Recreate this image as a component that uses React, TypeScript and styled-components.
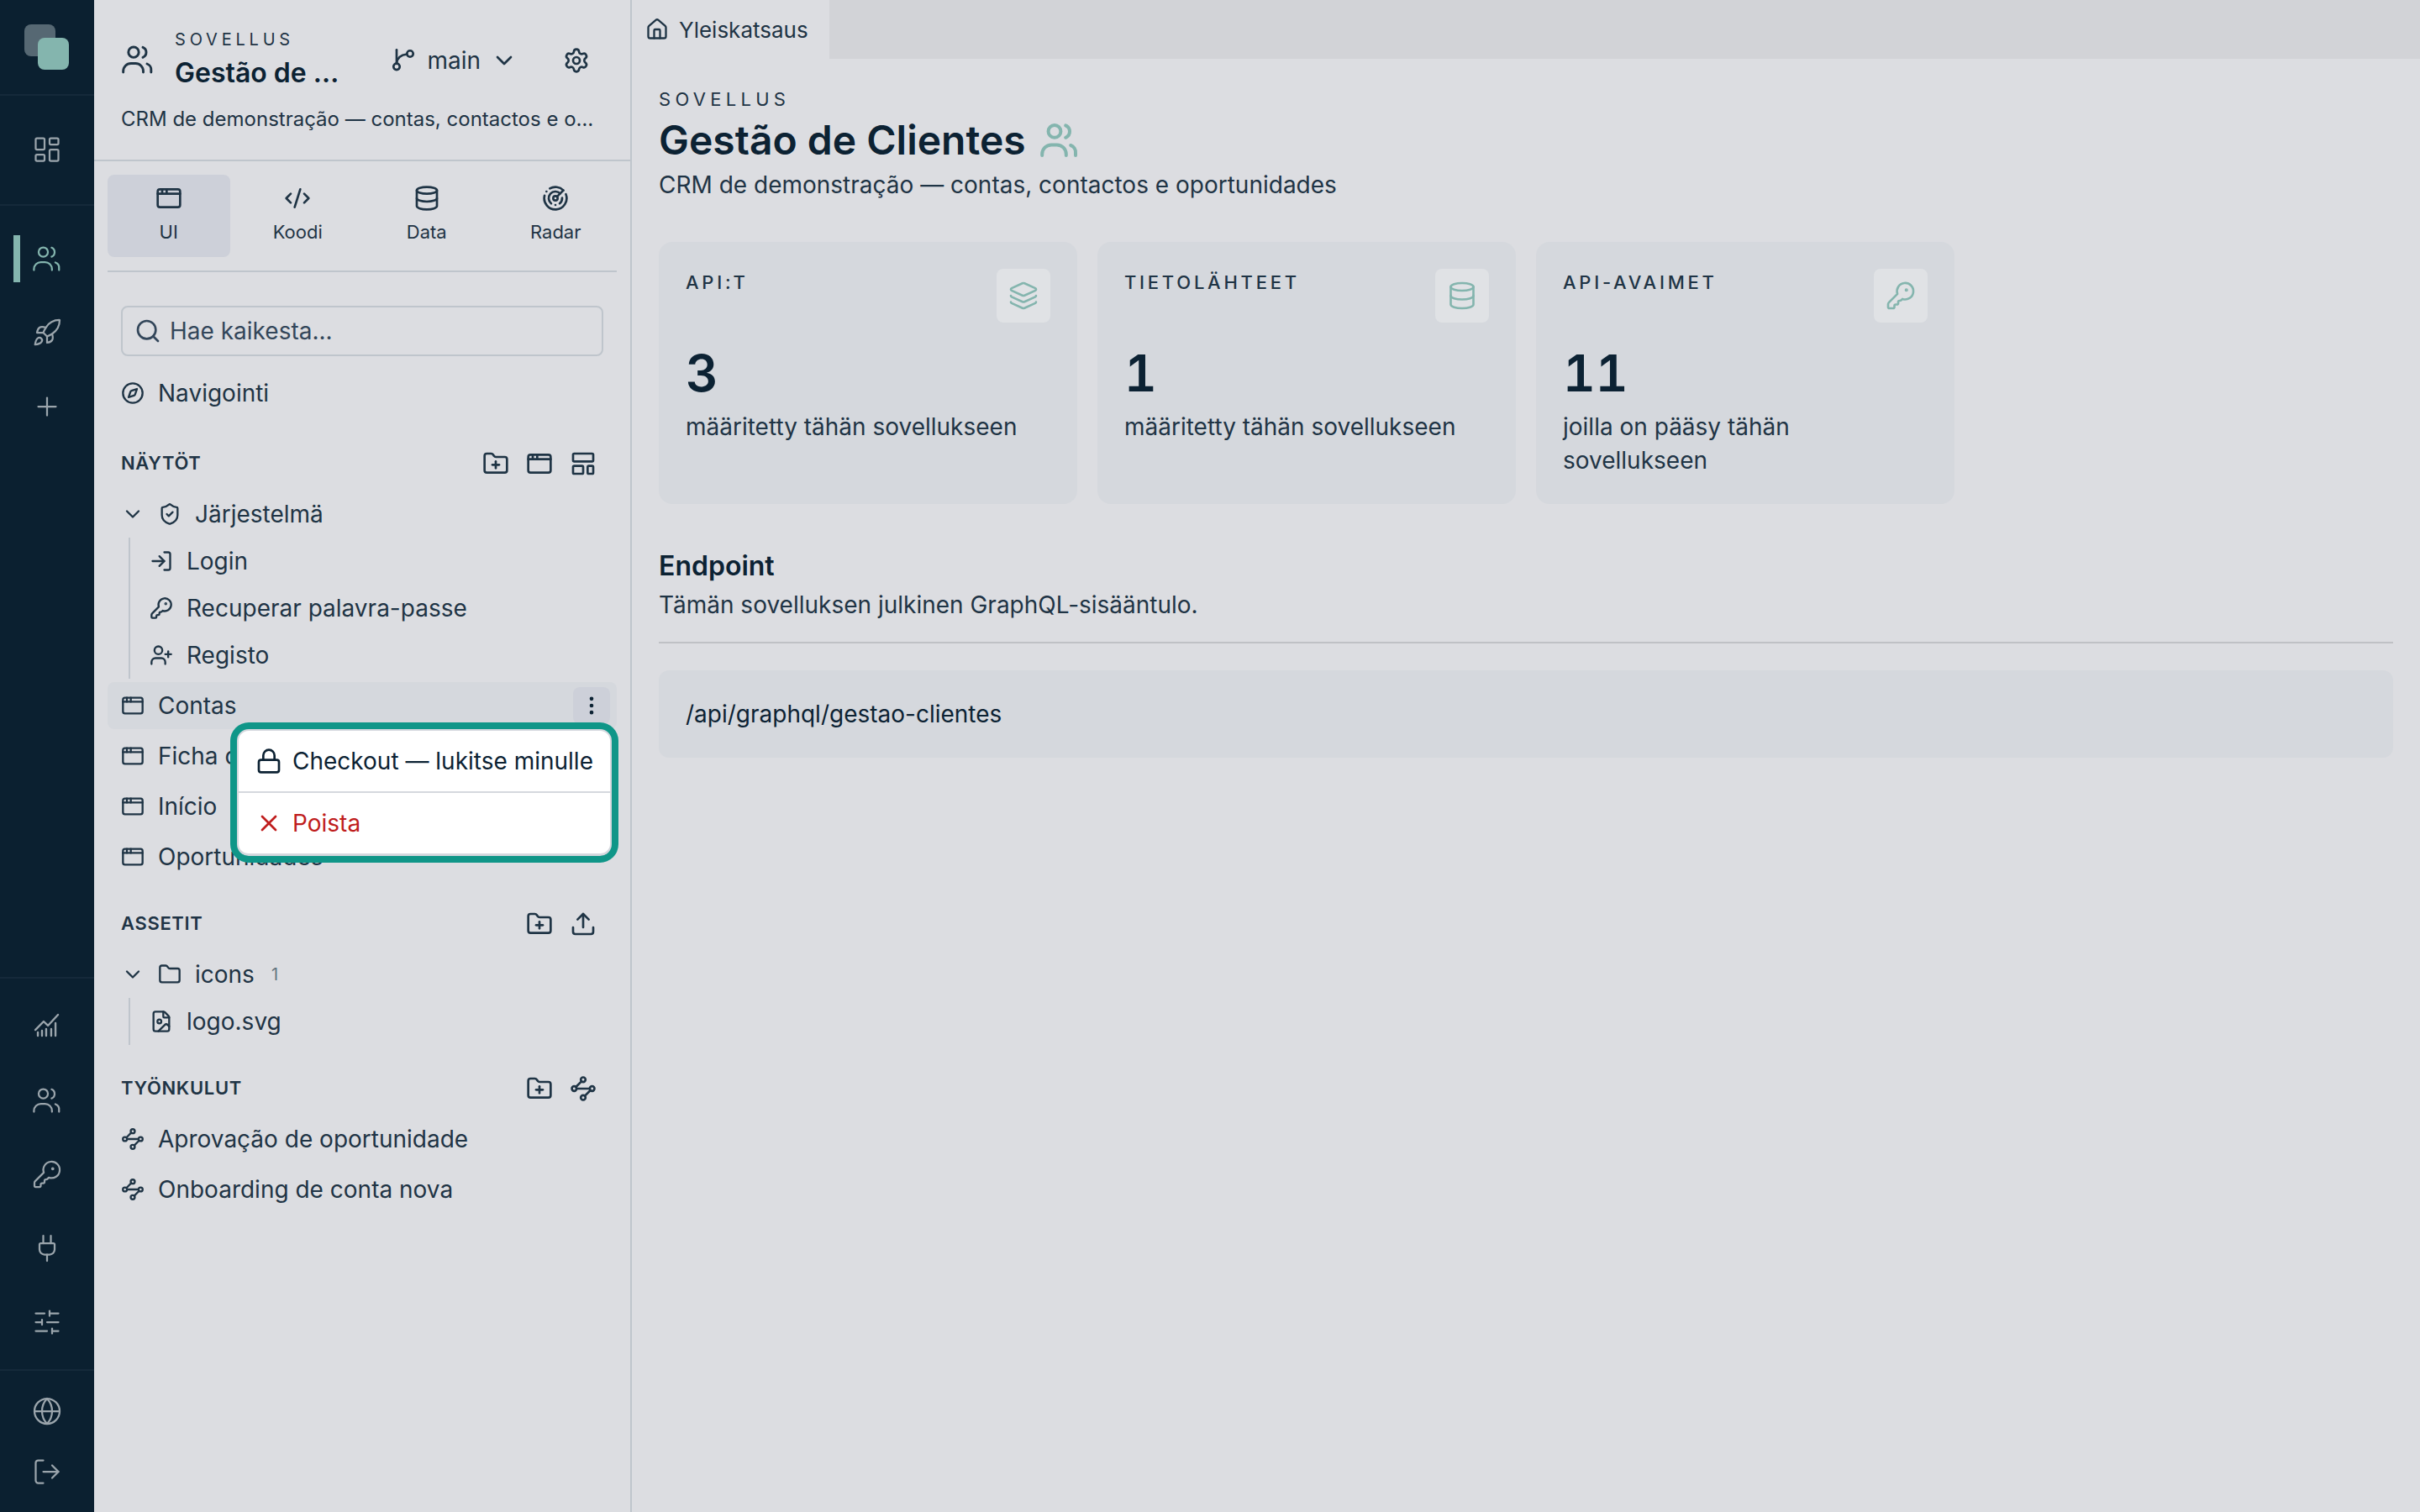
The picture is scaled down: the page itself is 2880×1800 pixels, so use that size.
import React from 'react';
import styled, { createGlobalStyle } from 'styled-components';
import {
  AppWindow, ChevronDown, CodeXml, Compass, Database, EllipsisVertical, FileImage, Folder,
  FolderPlus, Globe, House, KeyRound, Layers, LayoutDashboard, LayoutTemplate, Lock, LogIn,
  LogOut, Plug, Plus, Radar, Rocket, Search, Settings, ShieldCheck, SlidersHorizontal, Upload,
  UserPlus, X,
} from 'lucide-react';

const colors = {
  page: '#dcdde1',
  rail: '#0b2030',
  railLine: '#15293a',
  railIcon: '#9ba5ac',
  teal: '#84b5ae',
  ring: '#0f9688',
  ink: '#0c2233',
  text: '#1f3445',
  line: '#bfc5cc',
  soft: '#d5d8dd',
  active: '#cdd0d9',
  red: '#bf1d1d',
};

const GlobalStyle = createGlobalStyle`
  html, body {
    margin: 0;
    height: 100%;
    background: ${colors.page};
  }
  body {
    font-family: Inter, "Liberation Sans", sans-serif;
    color: ${colors.text};
  }
  svg {
    display: block;
    flex: none;
  }
`;

const Shell = styled.div`
  display: flex;
  width: 100%;
  height: 100vh;
  overflow: hidden;
`;

/* left rail */

const Rail = styled.nav`
  display: flex;
  flex-direction: column;
  flex: none;
  width: 112px;
  background: ${colors.rail};
  color: ${colors.railIcon};
`;

const LogoBlock = styled.div`
  height: 83px;
  padding: 29px 0 0 29px;
  border-bottom: 2px solid ${colors.railLine};
`;

const LogoMark = styled.div`
  position: relative;
  width: 53px;
  height: 54px;
`;

const LogoBack = styled.span`
  position: absolute;
  top: 0;
  left: 0;
  width: 37px;
  height: 38px;
  border-radius: 8px;
  background: #566873;
`;

const LogoFront = styled.span`
  position: absolute;
  right: 0;
  bottom: 0;
  width: 37px;
  height: 38px;
  border-radius: 8px;
  background: ${colors.teal};
`;

const RailGroup = styled.div<{ $pad: string; $line?: boolean; $grow?: boolean }>`
  display: flex;
  flex-direction: column;
  padding: ${p => p.$pad};
  border-bottom: ${p => (p.$line ? `2px solid ${colors.railLine}` : 'none')};
  flex: ${p => (p.$grow ? 1 : 'none')};
`;

const RailSlot = styled.a<{ $h?: number; $on?: boolean }>`
  position: relative;
  display: flex;
  align-items: center;
  justify-content: center;
  height: ${p => p.$h ?? 88}px;
  color: ${p => (p.$on ? colors.teal : 'inherit')};
`;

const RailMarker = styled.span`
  position: absolute;
  top: 16px;
  left: 16px;
  width: 8px;
  height: 56px;
  background: ${colors.teal};
`;

/* explorer sidebar */

const Sidebar = styled.aside`
  display: flex;
  flex-direction: column;
  flex: none;
  width: 640px;
  box-sizing: border-box;
  border-right: 2px solid ${colors.line};
`;

const SideHeader = styled.header`
  display: flex;
  flex-direction: column;
  gap: 19px;
  height: 192px;
  box-sizing: border-box;
  padding: 35px 48px 0 32px;
  border-bottom: 2px solid ${colors.line};
`;

const HeaderTop = styled.div`
  display: flex;
  align-items: center;
  gap: 24px;
`;

const TitleBox = styled.div`
  display: flex;
  flex-direction: column;
  gap: 8px;
  width: 196px;
`;

const Eyebrow = styled.div<{ $size: number }>`
  font-size: ${p => p.$size}px;
  line-height: ${p => p.$size + 4}px;
  letter-spacing: 0.24em;
  color: ${colors.text};
`;

const AppName = styled.div`
  font-size: 32px;
  line-height: 40px;
  font-weight: 600;
  color: ${colors.ink};
  white-space: nowrap;
  overflow: hidden;
  text-overflow: ellipsis;
`;

const BranchButton = styled.button`
  display: flex;
  align-items: center;
  gap: 12px;
  margin: 2px 30px 0 auto;
  padding: 0;
  border: 0;
  background: none;
  font: inherit;
  font-size: 28px;
  line-height: 40px;
  color: ${colors.text};
`;

const GearIcon = styled(Settings)`
  margin-top: 2px;
`;

const HeaderNote = styled.p`
  margin: 0;
  font-size: 24px;
  line-height: 32px;
  width: 574px;
  color: ${colors.text};
  white-space: nowrap;
  overflow: hidden;
  text-overflow: ellipsis;
`;

const SideBody = styled.div`
  display: flex;
  flex-direction: column;
  padding: 16px 16px 0;
`;

const ModeTabs = styled.div`
  display: grid;
  grid-template-columns: repeat(4, 1fr);
  gap: 8px;
  padding-bottom: 16px;
  border-bottom: 2px solid ${colors.line};
`;

const ModeTab = styled.button<{ $on?: boolean }>`
  display: flex;
  flex-direction: column;
  align-items: center;
  gap: 9px;
  height: 98px;
  box-sizing: border-box;
  padding: 12px 0 0;
  border: 0;
  border-radius: 8px;
  background: ${p => (p.$on ? colors.active : 'transparent')};
  font: inherit;
  font-size: 22px;
  line-height: 30px;
  color: ${colors.text};
`;

const SearchBox = styled.div`
  display: flex;
  align-items: center;
  gap: 10px;
  height: 60px;
  box-sizing: border-box;
  margin: 40px 16px 16px;
  padding: 0 14px;
  border: 2px solid ${colors.line};
  border-radius: 8px;
  font-size: 28px;
  color: #33465a;
`;

const Row = styled.div<{ $hover?: boolean; $child?: boolean }>`
  position: relative;
  display: flex;
  align-items: center;
  gap: 16px;
  height: 56px;
  box-sizing: border-box;
  padding: 0 8px 0 ${p => (p.$child ? '23px' : '16px')};
  border-radius: 8px;
  background: ${p => (p.$hover ? colors.soft : 'transparent')};
  font-size: 28px;
  color: ${colors.text};
  white-space: nowrap;
`;

const RootRows = styled.div<{ $top?: number }>`
  display: flex;
  flex-direction: column;
  gap: 4px;
  margin-top: ${p => p.$top ?? 0}px;
`;

const SectionHead = styled.div<{ $top?: number }>`
  display: flex;
  align-items: center;
  justify-content: space-between;
  height: 44px;
  margin: ${p => p.$top ?? 34}px 0 10px;
  padding: 0 18px 0 16px;
  font-size: 22px;
  font-weight: 600;
  letter-spacing: 0.03em;
  color: ${colors.text};
`;

const SectionLabel = styled.span`
  margin-top: -3px;
`;

const SectionActions = styled.div`
  display: flex;
  gap: 8px;
`;

const IconButton = styled.button`
  display: flex;
  align-items: center;
  justify-content: center;
  width: 44px;
  height: 44px;
  padding: 0;
  border: 0;
  border-radius: 8px;
  background: none;
  color: ${colors.text};
`;

const Kebab = styled(IconButton)`
  margin-left: auto;
  background: ${colors.active};
  color: ${colors.ink};
`;

const TreeChildren = styled.div`
  margin-left: 25px;
  border-left: 2px solid ${colors.line};
`;

const Count = styled.span`
  margin-left: 4px;
  font-size: 20px;
  color: #64747f;
`;

const Popover = styled.div`
  position: absolute;
  top: 56px;
  right: 6px;
  z-index: 5;
  width: 446px;
  box-sizing: border-box;
  border: 2px solid #d5d8de;
  border-bottom-width: 3px;
  border-radius: 14px;
  background: #fff;
  box-shadow: 0 0 0 8px ${colors.ring};
`;

const MenuItem = styled.div<{ $danger?: boolean; $split?: boolean }>`
  display: flex;
  align-items: center;
  gap: 12px;
  height: 72px;
  padding: 0 20px;
  border-top: ${p => (p.$split ? '2px solid #d5d8de' : 'none')};
  font-size: 28px;
  color: ${p => (p.$danger ? colors.red : colors.ink)};
`;

/* main area */

const Main = styled.main`
  display: flex;
  flex-direction: column;
  flex: 1;
  min-width: 0;
`;

const TabBar = styled.div`
  display: flex;
  flex: none;
  height: 70px;
  background: #d2d3d7;
`;

const PageTab = styled.div`
  display: flex;
  align-items: center;
  gap: 12px;
  padding: 0 25px 0 16px;
  background: ${colors.page};
  font-size: 26px;
  color: ${colors.text};
`;

const Content = styled.div`
  display: flex;
  flex-direction: column;
  padding: 35px 32px 0;
`;

const PageTitle = styled.h1`
  display: flex;
  align-items: center;
  gap: 16px;
  margin: 6px 0 3px;
  font-size: 48px;
  line-height: 60px;
  font-weight: 600;
  color: ${colors.ink};
`;

const TitleIcon = styled.span`
  color: ${colors.teal};
`;

const Lead = styled.p`
  margin: 0;
  font-size: 28px;
  line-height: 40px;
  color: ${colors.text};
`;

const CardGrid = styled.div`
  display: grid;
  grid-template-columns: repeat(3, 498px);
  gap: 24px;
  margin-top: 48px;
`;

const Card = styled.section`
  padding: 32px;
  border-radius: 16px;
  background: ${colors.soft};
`;

const CardTop = styled.div`
  display: flex;
  align-items: flex-start;
  justify-content: space-between;
`;

const CardLabel = styled.div`
  font-size: 22px;
  line-height: 32px;
  font-weight: 500;
  letter-spacing: 0.17em;
  color: ${colors.text};
`;

const CardIcon = styled.div`
  display: flex;
  align-items: center;
  justify-content: center;
  width: 64px;
  height: 64px;
  border-radius: 8px;
  background: #e0e2e5;
  color: ${colors.teal};
`;

const CardValue = styled.div`
  margin: 24px 0 8px;
  font-size: 60px;
  line-height: 72px;
  font-weight: 600;
  font-variant-numeric: tabular-nums;
  color: ${colors.ink};
`;

const CardNote = styled.div`
  font-size: 28px;
  line-height: 40px;
  color: ${colors.text};
`;

const SectionTitle = styled.h2`
  margin: 52px 0 4px;
  font-size: 32px;
  line-height: 44px;
  font-weight: 600;
  color: ${colors.ink};
`;

const SectionNote = styled.p`
  margin: 0;
  padding-bottom: 24px;
  border-bottom: 2px solid #bfc1c5;
  font-size: 28px;
  line-height: 40px;
  color: ${colors.text};
`;

const EndpointBox = styled.div`
  margin-top: 32px;
  padding: 32px;
  border-radius: 12px;
  background: ${colors.soft};
  font-size: 28px;
  line-height: 40px;
  color: ${colors.ink};
`;

// lucide's users is squarer than the one in the app, so it's drawn by hand
const UsersIcon = ({ size, strokeWidth = 1.75 }: { size: number; strokeWidth?: number }) => (
  <svg width={size} height={size} viewBox="0 0 24 24" fill="none" stroke="currentColor"
    strokeWidth={strokeWidth} strokeLinecap="round" strokeLinejoin="round">
    <circle cx="9" cy="6.7" r="3.7" />
    <path d="M1.6 21v-.8a5.5 5.5 0 0 1 5.5-5.5h3.3a5.5 5.5 0 0 1 5.5 5.5v.8" />
    <path d="M15.6 3.2a3.9 3.9 0 0 1 0 7.2" />
    <path d="M18.6 15a4.4 4.4 0 0 1 2.9 4.6V21" />
  </svg>
);

const BranchIcon = () => (
  <svg width="32" height="32" viewBox="0 0 24 24" fill="none" stroke="currentColor"
    strokeWidth="2" strokeLinecap="round" strokeLinejoin="round">
    <path d="M6 2.5v12" />
    <circle cx="6" cy="17.5" r="2.8" />
    <circle cx="18" cy="6" r="2.8" />
    <path d="M15.2 6.4C10 7 6.5 10 6 14.5" />
  </svg>
);

const ChartIcon = () => (
  <svg width="36" height="36" viewBox="0 0 24 24" fill="none" stroke="currentColor"
    strokeWidth="1.6" strokeLinecap="round" strokeLinejoin="round">
    <path d="M2.7 14.7 9.3 8l3.4 3.3 8-8.6" />
    <path d="M4.7 19.3v-2.6M8 19.3v-4M11.3 19.3V14M15.3 19.3V14M18.7 19.3V9.3" />
  </svg>
);

const WorkflowIcon = ({ size }: { size: number }) => (
  <svg width={size} height={size} viewBox="0 0 24 24" fill="none" stroke="currentColor"
    strokeWidth="2" strokeLinecap="round" strokeLinejoin="round">
    <circle cx="12" cy="4" r="2.1" />
    <circle cx="4" cy="12" r="2.1" />
    <circle cx="20" cy="12" r="2.1" />
    <circle cx="12" cy="20" r="2.1" />
    <path d="M10.5 5.5l-5 5M6.1 12h11.8M13.5 18.5l5-5" />
  </svg>
);

const railTop = [
  { icon: <UsersIcon size={36} strokeWidth={1.5} />, on: true },
  { icon: <Rocket size={36} strokeWidth={1.5} /> },
  { icon: <Plus size={36} strokeWidth={1.5} /> },
];

const railTools = [
  <ChartIcon key="chart" />,
  <UsersIcon key="users" size={36} strokeWidth={1.5} />,
  <KeyRound key="key" size={36} strokeWidth={1.5} />,
  <Plug key="plug" size={36} strokeWidth={1.5} />,
  <SlidersHorizontal key="sliders" size={36} strokeWidth={1.5} />,
];

const modes = [
  { label: 'UI', icon: AppWindow, on: true },
  { label: 'Koodi', icon: CodeXml },
  { label: 'Data', icon: Database },
  { label: 'Radar', icon: Radar },
];

const systemViews = [
  { label: 'Login', icon: LogIn },
  { label: 'Recuperar palavra-passe', icon: KeyRound },
  { label: 'Registo', icon: UserPlus },
];

const stats = [
  { label: 'API:T', value: '3', note: 'määritetty tähän sovellukseen', icon: Layers },
  { label: 'TIETOLÄHTEET', value: '1', note: 'määritetty tähän sovellukseen', icon: Database },
  { label: 'API-AVAIMET', value: '11', note: 'joilla on pääsy tähän sovellukseen', icon: KeyRound },
];

const App = () => (
  <Shell>
    <GlobalStyle />
    <Rail>
      <LogoBlock>
        <LogoMark>
          <LogoBack />
          <LogoFront />
        </LogoMark>
      </LogoBlock>
      <RailGroup $pad="20px 0 21px" $line>
        <RailSlot><LayoutDashboard size={36} strokeWidth={1.5} /></RailSlot>
      </RailGroup>
      <RailGroup $pad="19px 0 0" $line $grow>
        {railTop.map((item, i) => (
          <RailSlot key={i} $on={item.on}>
            {item.on && <RailMarker />}
            {item.icon}
          </RailSlot>
        ))}
      </RailGroup>
      <RailGroup $pad="13px 0 12px" $line>
        {railTools.map((icon, i) => <RailSlot key={i}>{icon}</RailSlot>)}
      </RailGroup>
      <RailGroup $pad="12px 0">
        <RailSlot $h={72}><Globe size={36} strokeWidth={1.5} /></RailSlot>
        <RailSlot $h={72}><LogOut size={36} strokeWidth={1.5} /></RailSlot>
      </RailGroup>
    </Rail>

    <Sidebar>
      <SideHeader>
        <HeaderTop>
          <UsersIcon size={40} />
          <TitleBox>
            <Eyebrow $size={20}>SOVELLUS</Eyebrow>
            <AppName>Gestão de Clientes</AppName>
          </TitleBox>
          <BranchButton>
            <BranchIcon />
            main
            <ChevronDown size={32} strokeWidth={2} />
          </BranchButton>
          <GearIcon size={32} strokeWidth={2} />
        </HeaderTop>
        <HeaderNote>CRM de demonstração — contas, contactos e oportunidades</HeaderNote>
      </SideHeader>

      <SideBody>
        <ModeTabs>
          {modes.map(({ label, icon: Icon, on }) => (
            <ModeTab key={label} $on={on}>
              <Icon size={32} strokeWidth={2} />
              {label}
            </ModeTab>
          ))}
        </ModeTabs>

        <SearchBox>
          <Search size={32} strokeWidth={2} />
          Hae kaikesta...
        </SearchBox>
        <Row><Compass size={28} />Navigointi</Row>

        <SectionHead>
          <SectionLabel>NÄYTÖT</SectionLabel>
          <SectionActions>
            <IconButton><FolderPlus size={32} /></IconButton>
            <IconButton><AppWindow size={32} /></IconButton>
            <IconButton><LayoutTemplate size={32} /></IconButton>
          </SectionActions>
        </SectionHead>
        <Row><ChevronDown size={28} /><ShieldCheck size={28} />Järjestelmä</Row>
        <TreeChildren>
          {systemViews.map(({ label, icon: Icon }) => (
            <Row key={label} $child><Icon size={28} />{label}</Row>
          ))}
        </TreeChildren>
        <RootRows $top={4}>
          <Row $hover>
            <AppWindow size={28} />Contas
            <Kebab><EllipsisVertical size={28} /></Kebab>
            <Popover>
              <MenuItem><Lock size={32} />Checkout — lukitse minulle</MenuItem>
              <MenuItem $danger $split><X size={32} />Poista</MenuItem>
            </Popover>
          </Row>
          <Row><AppWindow size={28} />Ficha de conta</Row>
          <Row><AppWindow size={28} />Início</Row>
          <Row><AppWindow size={28} />Oportunidades</Row>
        </RootRows>

        <SectionHead $top={30}>
          <SectionLabel>ASSETIT</SectionLabel>
          <SectionActions>
            <IconButton><FolderPlus size={32} /></IconButton>
            <IconButton><Upload size={32} /></IconButton>
          </SectionActions>
        </SectionHead>
        <Row><ChevronDown size={28} /><Folder size={28} />icons<Count>1</Count></Row>
        <TreeChildren>
          <Row $child><FileImage size={28} />logo.svg</Row>
        </TreeChildren>

        <SectionHead $top={30}>
          <SectionLabel>TYÖNKULUT</SectionLabel>
          <SectionActions>
            <IconButton><FolderPlus size={32} /></IconButton>
            <IconButton><WorkflowIcon size={32} /></IconButton>
          </SectionActions>
        </SectionHead>
        <RootRows>
          <Row><WorkflowIcon size={28} />Aprovação de oportunidade</Row>
          <Row><WorkflowIcon size={28} />Onboarding de conta nova</Row>
        </RootRows>
      </SideBody>
    </Sidebar>

    <Main>
      <TabBar>
        <PageTab><House size={28} />Yleiskatsaus</PageTab>
      </TabBar>
      <Content>
        <Eyebrow $size={22}>SOVELLUS</Eyebrow>
        <PageTitle>
          Gestão de Clientes
          <TitleIcon><UsersIcon size={48} strokeWidth={2} /></TitleIcon>
        </PageTitle>
        <Lead>CRM de demonstração — contas, contactos e oportunidades</Lead>

        <CardGrid>
          {stats.map(({ label, value, note, icon: Icon }) => (
            <Card key={label}>
              <CardTop>
                <CardLabel>{label}</CardLabel>
                <CardIcon><Icon size={36} strokeWidth={1.75} /></CardIcon>
              </CardTop>
              <CardValue>{value}</CardValue>
              <CardNote>{note}</CardNote>
            </Card>
          ))}
        </CardGrid>

        <SectionTitle>Endpoint</SectionTitle>
        <SectionNote>Tämän sovelluksen julkinen GraphQL-sisääntulo.</SectionNote>
        <EndpointBox>/api/graphql/gestao-clientes</EndpointBox>
      </Content>
    </Main>
  </Shell>
);

export default App;
